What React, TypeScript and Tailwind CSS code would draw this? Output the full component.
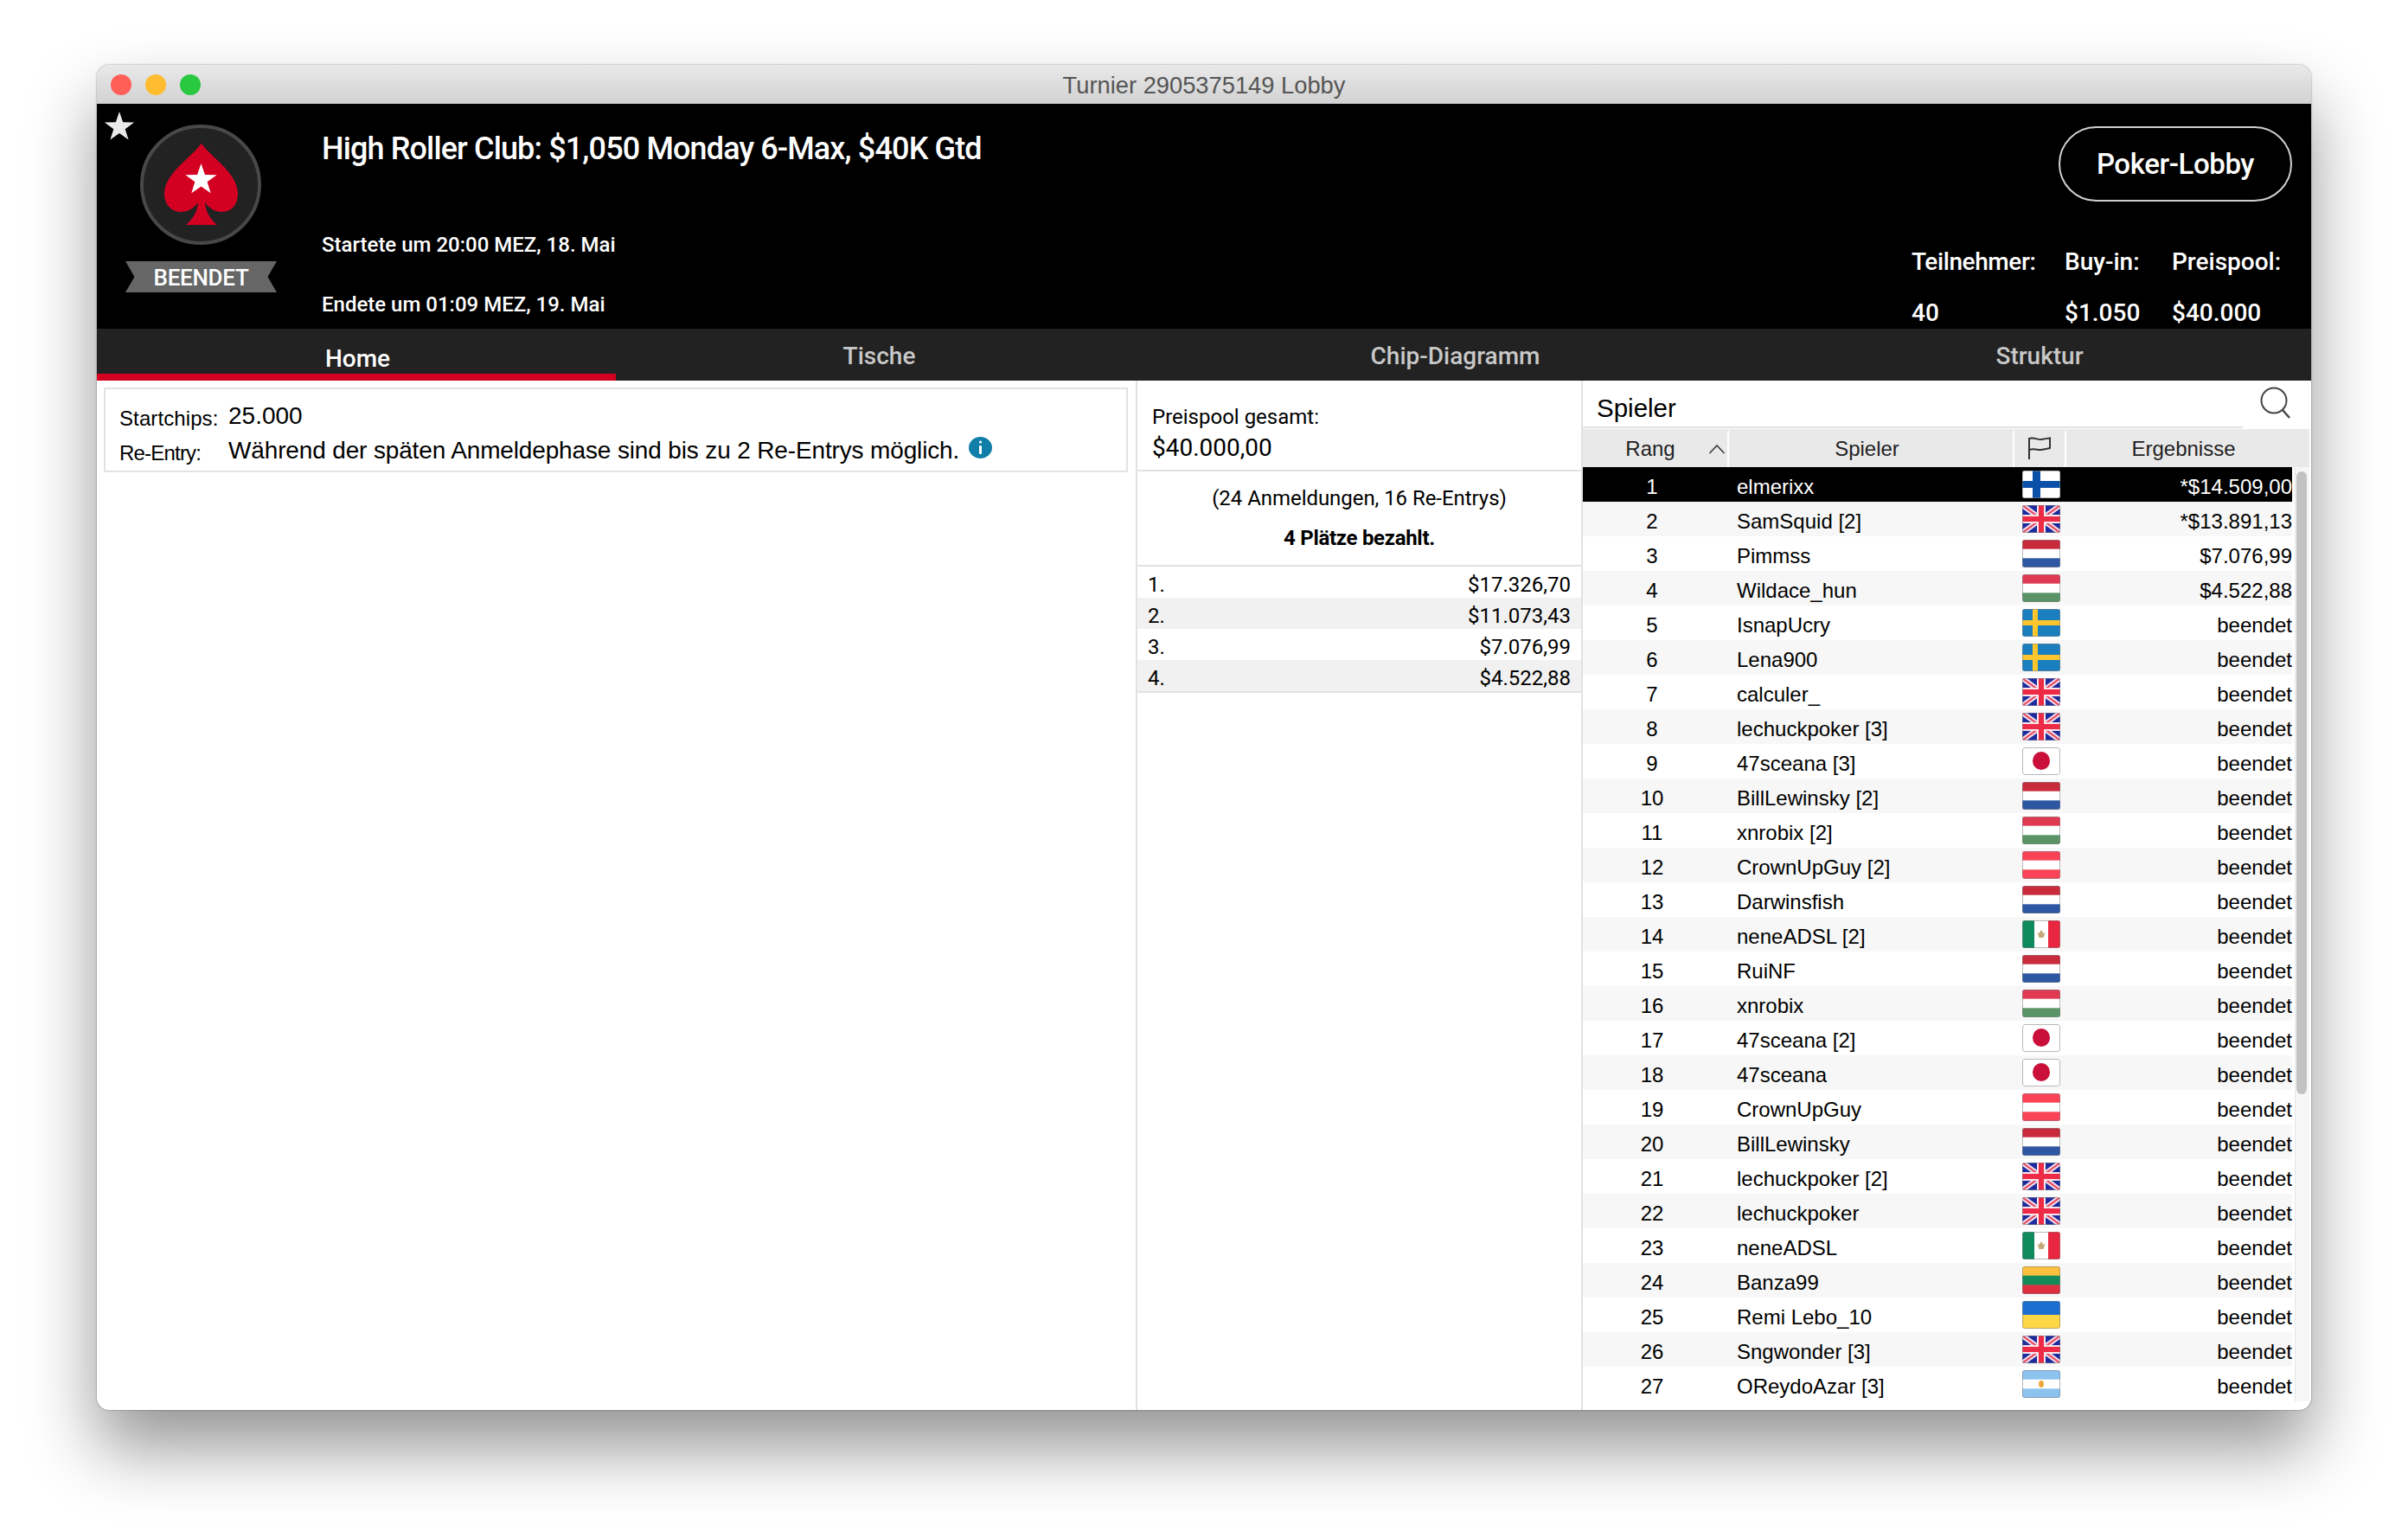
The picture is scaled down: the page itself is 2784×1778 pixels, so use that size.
import React from 'react'

type FlagCode = 'fi' | 'uk' | 'nl' | 'hu' | 'se' | 'jp' | 'at' | 'mx' | 'lt' | 'ua' | 'ar'

interface Player {
  name: string
  flag: FlagCode
  result?: string
}

const players: Player[] = [
  { name: 'elmerixx', flag: 'fi', result: '*$14.509,00' },
  { name: 'SamSquid [2]', flag: 'uk', result: '*$13.891,13' },
  { name: 'Pimmss', flag: 'nl', result: '$7.076,99' },
  { name: 'Wildace_hun', flag: 'hu', result: '$4.522,88' },
  { name: 'IsnapUcry', flag: 'se' },
  { name: 'Lena900', flag: 'se' },
  { name: 'calculer_', flag: 'uk' },
  { name: 'lechuckpoker [3]', flag: 'uk' },
  { name: '47sceana [3]', flag: 'jp' },
  { name: 'BillLewinsky [2]', flag: 'nl' },
  { name: 'xnrobix [2]', flag: 'hu' },
  { name: 'CrownUpGuy [2]', flag: 'at' },
  { name: 'Darwinsfish', flag: 'nl' },
  { name: 'neneADSL [2]', flag: 'mx' },
  { name: 'RuiNF', flag: 'nl' },
  { name: 'xnrobix', flag: 'hu' },
  { name: '47sceana [2]', flag: 'jp' },
  { name: '47sceana', flag: 'jp' },
  { name: 'CrownUpGuy', flag: 'at' },
  { name: 'BillLewinsky', flag: 'nl' },
  { name: 'lechuckpoker [2]', flag: 'uk' },
  { name: 'lechuckpoker', flag: 'uk' },
  { name: 'neneADSL', flag: 'mx' },
  { name: 'Banza99', flag: 'lt' },
  { name: 'Remi Lebo_10', flag: 'ua' },
  { name: 'Sngwonder [3]', flag: 'uk' },
  { name: 'OReydoAzar [3]', flag: 'ar' },
]

const payouts = ['$17.326,70', '$11.073,43', '$7.076,99', '$4.522,88']

const starPoints = (cx: number, cy: number, outer: number, inner: number) =>
  Array.from({ length: 10 }, (_, i) => {
    const r = i % 2 === 0 ? outer : inner
    const a = (Math.PI / 5) * i - Math.PI / 2
    return `${(cx + r * Math.cos(a)).toFixed(2)},${(cy + r * Math.sin(a)).toFixed(2)}`
  }).join(' ')

const Stripes: React.FC<{ colors: string[] }> = ({ colors }) => (
  <>
    {colors.map((c, i) => (
      <rect key={c + i} x="0" y={(32 / colors.length) * i} width="44" height={32 / colors.length + 0.5} fill={c} />
    ))}
  </>
)

const FlagArt: React.FC<{ code: FlagCode }> = ({ code }) => {
  switch (code) {
    case 'fi':
      return (
        <>
          <rect width="44" height="32" fill="#ffffff" />
          <rect x="12" width="9" height="32" fill="#0b50a8" />
          <rect y="12" width="44" height="8" fill="#0b50a8" />
        </>
      )
    case 'uk':
      return (
        <>
          <rect width="44" height="32" fill="#1c2a9e" />
          <path d="M0 0L44 32M44 0L0 32" stroke="#f2dfe6" strokeWidth="6" />
          <path d="M0 0L44 32M44 0L0 32" stroke="#e8445f" strokeWidth="2" />
          <rect x="17" width="10" height="32" fill="#f7e6ea" />
          <rect y="11" width="44" height="10" fill="#f7e6ea" />
          <rect x="19" width="6" height="32" fill="#ee2b47" />
          <rect y="13" width="44" height="6" fill="#ee2b47" />
        </>
      )
    case 'nl':
      return <Stripes colors={['#c82b3c', '#ffffff', '#2d56a3']} />
    case 'hu':
      return <Stripes colors={['#e03a52', '#ffffff', '#5a9466']} />
    case 'at':
      return <Stripes colors={['#fb4358', '#ffffff', '#fb4358']} />
    case 'lt':
      return <Stripes colors={['#fcc03f', '#148a5a', '#dc2f40']} />
    case 'ua':
      return <Stripes colors={['#1a6fd0', '#ffd645']} />
    case 'se':
      return (
        <>
          <rect width="44" height="32" fill="#1a7fbf" />
          <rect x="12" width="6" height="32" fill="#fcc52c" />
          <rect y="13" width="44" height="6" fill="#fcc52c" />
        </>
      )
    case 'jp':
      return (
        <>
          <rect width="44" height="32" fill="#ffffff" />
          <ellipse cx="22" cy="15.5" rx="10" ry="10.5" fill="#c90f3a" />
        </>
      )
    case 'mx':
      return (
        <>
          <rect width="44" height="32" fill="#ffffff" />
          <rect width="14" height="32" fill="#0e8a5e" />
          <rect x="30" width="14" height="32" fill="#e9263f" />
          <path d="M22 11l2.5 4 2-1-2 6h-5l-2-6 2 1z" fill="#c5a878" />
        </>
      )
    case 'ar':
      return (
        <>
          <Stripes colors={['#8cc2ee', '#ffffff', '#8cc2ee']} />
          <ellipse cx="22" cy="16" rx="3" ry="4" fill="#eaa63a" />
        </>
      )
  }
}

const Flag: React.FC<{ code: FlagCode }> = ({ code }) => (
  <svg width="44" height="32" viewBox="0 0 44 32" className="mt-1 shrink-0 rounded-[3px]">
    <FlagArt code={code} />
    <rect x="0.5" y="0.5" width="43" height="31" rx="2.5" fill="none" stroke="#808080" strokeOpacity="0.55" />
  </svg>
)

const SpadeLogo: React.FC = () => (
  <svg width="140" height="139" viewBox="0 0 140 139" className="ml-[50px] mt-6">
    <ellipse cx="70" cy="69.5" rx="68" ry="67.5" fill="#222222" stroke="#484848" strokeWidth="4" />
    <path
      d="M70.5 22C62 36 28 56 28 80C28 92 36 101 47 101C55 101 62 97 67 90C66 102 60 110 53 116L89 116C82 110 76 102 75 90C80 97 87 101 95 101C106 101 113 92 113 80C113 56 80 36 71 22Z"
      fill="#d40022"
    />
    <polygon points={starPoints(70.5, 64, 19, 7.5)} fill="#ffffff" />
  </svg>
)

const TopHeader: React.FC = () => (
  <div className="flex h-[260px] bg-black text-white font-[Roboto,sans-serif] font-medium">
    <div className="relative w-[260px] shrink-0">
      <svg width="36" height="36" viewBox="0 0 36 36" className="absolute left-[8px] top-[8px]">
        <polygon points={starPoints(18, 19, 18, 7)} fill="#e9e9e9" />
      </svg>
      <SpadeLogo />
      <div className="ml-[33px] mt-[19px] flex h-9 w-[175px] items-center justify-center bg-[#666666] pt-px text-[26px] leading-9 tracking-[-0.3px] [clip-path:polygon(0_0,100%_0,94%_50%,100%_100%,0_100%,6%_50%)]">
        BEENDET
      </div>
    </div>

    <div className="flex-1">
      <div className="mt-[30px] text-[36px] leading-[44px] tracking-[-0.87px]">High Roller Club: $1,050 Monday 6-Max, $40K Gtd</div>
      <div className="mt-[73px] text-[24px] leading-8">Startete um 20:00 MEZ, 18. Mai</div>
      <div className="mt-[37px] text-[24px] leading-8">Endete um 01:09 MEZ, 19. Mai</div>
    </div>

    <div className="flex w-[462px] shrink-0 flex-col items-end">
      <div className="mr-[22px] mt-[26px] flex h-[87px] w-[270px] items-center justify-center rounded-full border-2 border-[#d0d0d0] text-[33px] tracking-[-0.4px]">
        Poker-Lobby
      </div>
      <div className="mt-[52px] grid w-full grid-cols-[177px_124px_161px] gap-y-[23px] text-[28px] leading-9">
        <div className="tracking-[-0.4px]">Teilnehmer:</div>
        <div>Buy-in:</div>
        <div>Preispool:</div>
        <div>40</div>
        <div>$1.050</div>
        <div>$40.000</div>
      </div>
    </div>
  </div>
)

const Tabs: React.FC = () => (
  <div className="flex h-[60px] bg-[#222222] text-[28px] font-medium font-[Roboto,sans-serif] text-[#c8c8c8]">
    <div className="flex w-[600px] flex-col items-center border-b-[8px] border-[#d40022] pl-[3px] pt-[17px] text-white">
      <span className="leading-9">Home</span>
    </div>
    <div className="w-[606px] pl-[3px] pt-[14px] text-center leading-9">Tische</div>
    <div className="w-[726px] pl-[3px] pt-[14px] text-center leading-9">Chip-Diagramm</div>
    <div className="w-[628px] pt-[14px] text-center leading-9">Struktur</div>
  </div>
)

const InfoPanel: React.FC = () => (
  <div className="w-[1201px] shrink-0 pl-2 pr-[9px] pt-2 font-['Liberation_Sans',sans-serif] text-black">
    <div className="h-[98px] border-2 border-[#e2e2e2] pl-4 pt-[11px]">
      <div className="flex h-10 items-center">
        <span className="w-[126px] pt-[6px] text-[24px] tracking-[0.1px]">Startchips:</span>
        <span className="text-[28px]">25.000</span>
      </div>
      <div className="flex h-10 items-center">
        <span className="w-[126px] pt-[6px] text-[24px] tracking-[-0.8px]">Re-Entry:</span>
        <span className="text-[28px] tracking-[-0.145px]">Während der späten Anmeldephase sind bis zu 2 Re-Entrys möglich.</span>
        <svg width="27" height="25" viewBox="0 0 27 25" className="mb-2 ml-[11px]">
          <ellipse cx="13.5" cy="12.5" rx="13.5" ry="12.5" fill="#0f7ea8" />
          <circle cx="13.5" cy="6" r="1.6" fill="#ffffff" />
          <rect x="12" y="10" width="3" height="10" rx="1" fill="#ffffff" />
        </svg>
      </div>
    </div>
  </div>
)

const PrizePanel: React.FC = () => (
  <div className="w-[517px] shrink-0 border-x-2 border-[#e2e2e2] font-[Roboto,sans-serif] text-black">
    <div className="h-[105px] border-b-2 border-[#e2e2e2] pl-[17px] pt-[26px]">
      <div className="text-[24px] leading-8">Preispool gesamt:</div>
      <div className="text-[28px] leading-10">$40.000,00</div>
    </div>
    <div className="h-[110px] border-b-2 border-[#e2e2e2] pt-[15px] text-center text-[24px] leading-8">
      <div className="tracking-[-0.05px]">(24 Anmeldungen, 16 Re-Entrys)</div>
      <div className="mt-[14px] font-bold tracking-[-0.3px]">4 Plätze bezahlt.</div>
    </div>
    <div className="border-b-2 border-[#e2e2e2] text-[24px]">
      {payouts.map((p, i) => (
        <div key={p} className={`flex h-9 items-center justify-between pl-3 pr-3 pt-[5px] ${i % 2 === 1 ? 'bg-[#f1f1f1]' : ''}`}>
          <span>{i + 1}.</span>
          <span>{p}</span>
        </div>
      ))}
    </div>
  </div>
)

const PlayerPanel: React.FC = () => (
  <div className="min-w-0 flex-1 font-['Liberation_Sans',sans-serif] text-black">
    <div className="flex h-[55px]">
      <div className="h-[55px] w-[763px] border-b-2 border-[#e2e2e2] pl-4 pt-[14px] text-[29.5px] leading-9">Spieler</div>
      <svg width="36" height="38" viewBox="0 0 36 38" className="ml-[20px] mt-[7px]">
        <circle cx="16" cy="16" r="14.5" fill="none" stroke="#444444" strokeWidth="2" />
        <path d="M26 27L34 36" stroke="#444444" strokeWidth="2.5" />
      </svg>
    </div>
    <div className="mt-px flex h-11 w-[840px] bg-[#e9e9e9] pt-[2px] text-[24px] text-[#222222]">
      <div className="flex w-[169px] items-center border-r-2 border-white">
        <span className="w-[156px] text-center">Rang</span>
        <svg width="20" height="12" viewBox="0 0 20 12" className="-ml-[11px]">
          <path d="M1.5 11L10 2L18.5 11" fill="none" stroke="#444444" strokeWidth="1.8" />
        </svg>
      </div>
      <div className="flex w-[330px] items-center justify-center border-r-2 border-white pr-[9px]">Spieler</div>
      <div className="flex w-[60px] items-center justify-center border-r-2 border-white pb-[2px]">
        <svg width="28" height="26" viewBox="0 0 28 26">
          <path
            d="M2 26V2C8 0 12 4 16 3C19 2.5 22 2 26 1.5V13C22 14 19 14.5 16 15C12 15.5 8 13 2 15"
            fill="none"
            stroke="#333333"
            strokeWidth="2"
          />
        </svg>
      </div>
      <div className="flex flex-1 items-center justify-center pr-[10px]">Ergebnisse</div>
    </div>
    <div className="flex">
      <div className="w-[820px] shrink-0 text-[24px]">
        {players.map((p, i) => (
          <div
            key={p.name}
            className={`flex h-10 ${i === 0 ? 'bg-black text-white' : i % 2 === 1 ? 'bg-[#f7f7f7]' : 'bg-white'}`}
          >
            <span className="w-[160px] pt-[2px] text-center leading-[42px]">{i + 1}</span>
            <span className="w-[348px] pl-[18px] pt-[2px] leading-[42px]">{p.name}</span>
            <Flag code={p.flag} />
            <span className="flex-1 pt-[2px] text-right leading-[42px]">{p.result ?? 'beendet'}</span>
          </div>
        ))}
      </div>
      <div className="ml-[3px] w-[17px] border-l border-[#e6e6e6] bg-[#f6f6f6] pl-[1px] pr-[3px] pt-[5px]">
        <div className="h-[720px] w-3 rounded-full bg-[#c2c2c2]" />
      </div>
    </div>
  </div>
)

export default function App() {
  return (
    <div className="h-[1778px] w-[2784px] overflow-hidden bg-white pl-[112px] pt-[75px]">
      <div className="h-[1555px] w-[2560px] overflow-hidden rounded-[14px] bg-white shadow-[0_44px_80px_rgba(0,0,0,0.42),0_0_2px_rgba(0,0,0,0.5)]">
        <div className="flex h-[45px] items-center bg-gradient-to-b from-[#e9e9e9] to-[#d2d2d2] pl-4">
          <div className="flex w-[120px] gap-4">
            <span className="h-6 w-6 rounded-full bg-[#ff5f57]" />
            <span className="h-6 w-6 rounded-full bg-[#febc2e]" />
            <span className="h-6 w-6 rounded-full bg-[#28c840]" />
          </div>
          <div className="flex-1 pr-[136px] pt-[3px] text-center font-['Liberation_Sans',sans-serif] text-[27.3px] text-[#555555]">
            Turnier 2905375149 Lobby
          </div>
        </div>
        <TopHeader />
        <Tabs />
        <div className="flex h-[1190px]">
          <InfoPanel />
          <PrizePanel />
          <PlayerPanel />
        </div>
      </div>
    </div>
  )
}
